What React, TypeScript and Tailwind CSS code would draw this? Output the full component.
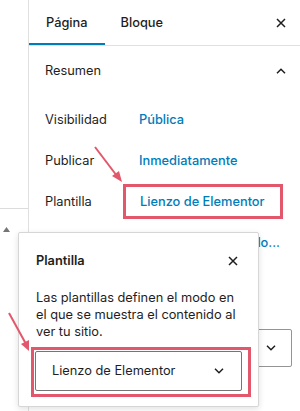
import { ReactNode } from "react";

const font = { fontFamily: "Inter, 'Noto Sans', sans-serif" };

function CloseIcon() {
  return (
    <svg width="10" height="10" viewBox="0 0 10 10" className="text-[#1e1e1e]">
      <path d="M1 1L9 9M9 1L1 9" stroke="currentColor" strokeWidth="1.5" />
    </svg>
  );
}

function Chevron({ up = false }: { up?: boolean }) {
  return (
    <svg width="10" height="6" viewBox="0 0 10 6" className="text-[#1e1e1e]">
      <path
        d={up ? "M1 5.2L5 1.2L9 5.2" : "M1 0.8L5 4.8L9 0.8"}
        fill="none"
        stroke="currentColor"
        strokeWidth="1.5"
      />
    </svg>
  );
}

function Row({ label, children }: { label: string; children: ReactNode }) {
  return (
    <div className="flex items-center h-[41px]">
      <span className="w-[94px] shrink-0">{label}</span>
      {children}
    </div>
  );
}

export default function App() {
  return (
    <div
      className="relative w-[300px] h-[411px] overflow-hidden bg-white text-[12.8px] text-[#1e1e1e]"
      style={font}
    >
      <div className="flex h-full">
        {/* canvas edge */}
        <div className="w-[28px] shrink-0 flex flex-col">
          <div className="h-[209px] border-b border-[#dcdcdc]" />
          <div className="pl-[3px] pt-[18px]">
            <svg width="7" height="5" viewBox="0 0 7 5">
              <polygon points="3.5,0 7,5 0,5" fill="#757575" />
            </svg>
          </div>
        </div>

        {/* sidebar */}
        <div className="flex-1 border-l border-[#e0e0e0] flex flex-col">
          <div className="flex items-center h-[46px] border-b border-[#e0e0e0]">
            <div className="h-full flex items-center px-[17px] font-medium shadow-[inset_0_-2px_0_#007cba]">
              Página
            </div>
            <div className="h-full flex items-center px-[16px] font-medium">
              Bloque
            </div>
            <div className="ml-auto mr-[14px] flex items-center">
              <CloseIcon />
            </div>
          </div>

          <div className="flex items-center justify-between h-[50px] pl-[16px] pr-[14px]">
            <span>Resumen</span>
            <Chevron up />
          </div>

          <div className="pl-[16px] pr-[17px] pt-[3px]">
            <Row label="Visibilidad">
              <span className="text-[#007cba] font-medium">Pública</span>
            </Row>
            <Row label="Publicar">
              <span className="text-[#007cba] font-medium">Inmediatamente</span>
            </Row>
            <Row label="Plantilla">
              <div className="-ml-[16px] flex-1 h-[35px] border-[3px] border-[#e2576b] flex items-center pl-[14px] text-[#007cba] font-medium">
                Lienzo de Elementor
              </div>
            </Row>
            <Row label="Autor">
              <span className="ml-auto mr-[3px] text-[#007cba] font-medium whitespace-nowrap">
                Crear nuevo modelo...
              </span>
            </Row>
          </div>

          <div className="mt-[66px] ml-[16px] mr-[8px] h-[38px] border border-[#949494] rounded-[2px] flex items-center justify-end pr-[15px]">
            <Chevron />
          </div>
        </div>
      </div>

      {/* popover */}
      <div className="absolute left-[18px] top-[232px] w-[241px] h-[175px] bg-white border border-[#d6d6d6] rounded-[2px] shadow-[0_2px_6px_rgba(0,0,0,0.12)]">
        <div className="flex items-center justify-between h-[24px] mt-[16px] pl-[17px] pr-[20px]">
          <span className="font-semibold">Plantilla</span>
          <CloseIcon />
        </div>
        <p className="mt-[16px] pl-[17px] pr-[12px] leading-[17px]">
          Las plantillas definen el modo en el que se muestra el contenido al
          ver tu sitio.
        </p>
        <div className="mt-[7px] ml-[12px] w-[220px] h-[50px] border-[3px] border-[#e2576b] pt-[1px] pl-[1px]">
          <div className="w-[207px] h-[40px] border border-[#757575] rounded-[2px] flex items-center justify-between pl-[16px] pr-[17px]">
            <span>Lienzo de Elementor</span>
            <Chevron />
          </div>
        </div>
      </div>

      {/* annotation arrows */}
      <svg
        className="absolute inset-0 pointer-events-none"
        width="300"
        height="411"
        viewBox="0 0 300 411"
      >
        <line x1="95" y1="147" x2="117" y2="176" stroke="#e2576b" strokeWidth="2" />
        <polygon points="122,182 112,176 119,171" fill="#e2576b" />
        <line x1="9" y1="313" x2="26" y2="344" stroke="#e2576b" strokeWidth="2" />
        <polygon points="29,351 21,344 29,340" fill="#e2576b" />
      </svg>
    </div>
  );
}
